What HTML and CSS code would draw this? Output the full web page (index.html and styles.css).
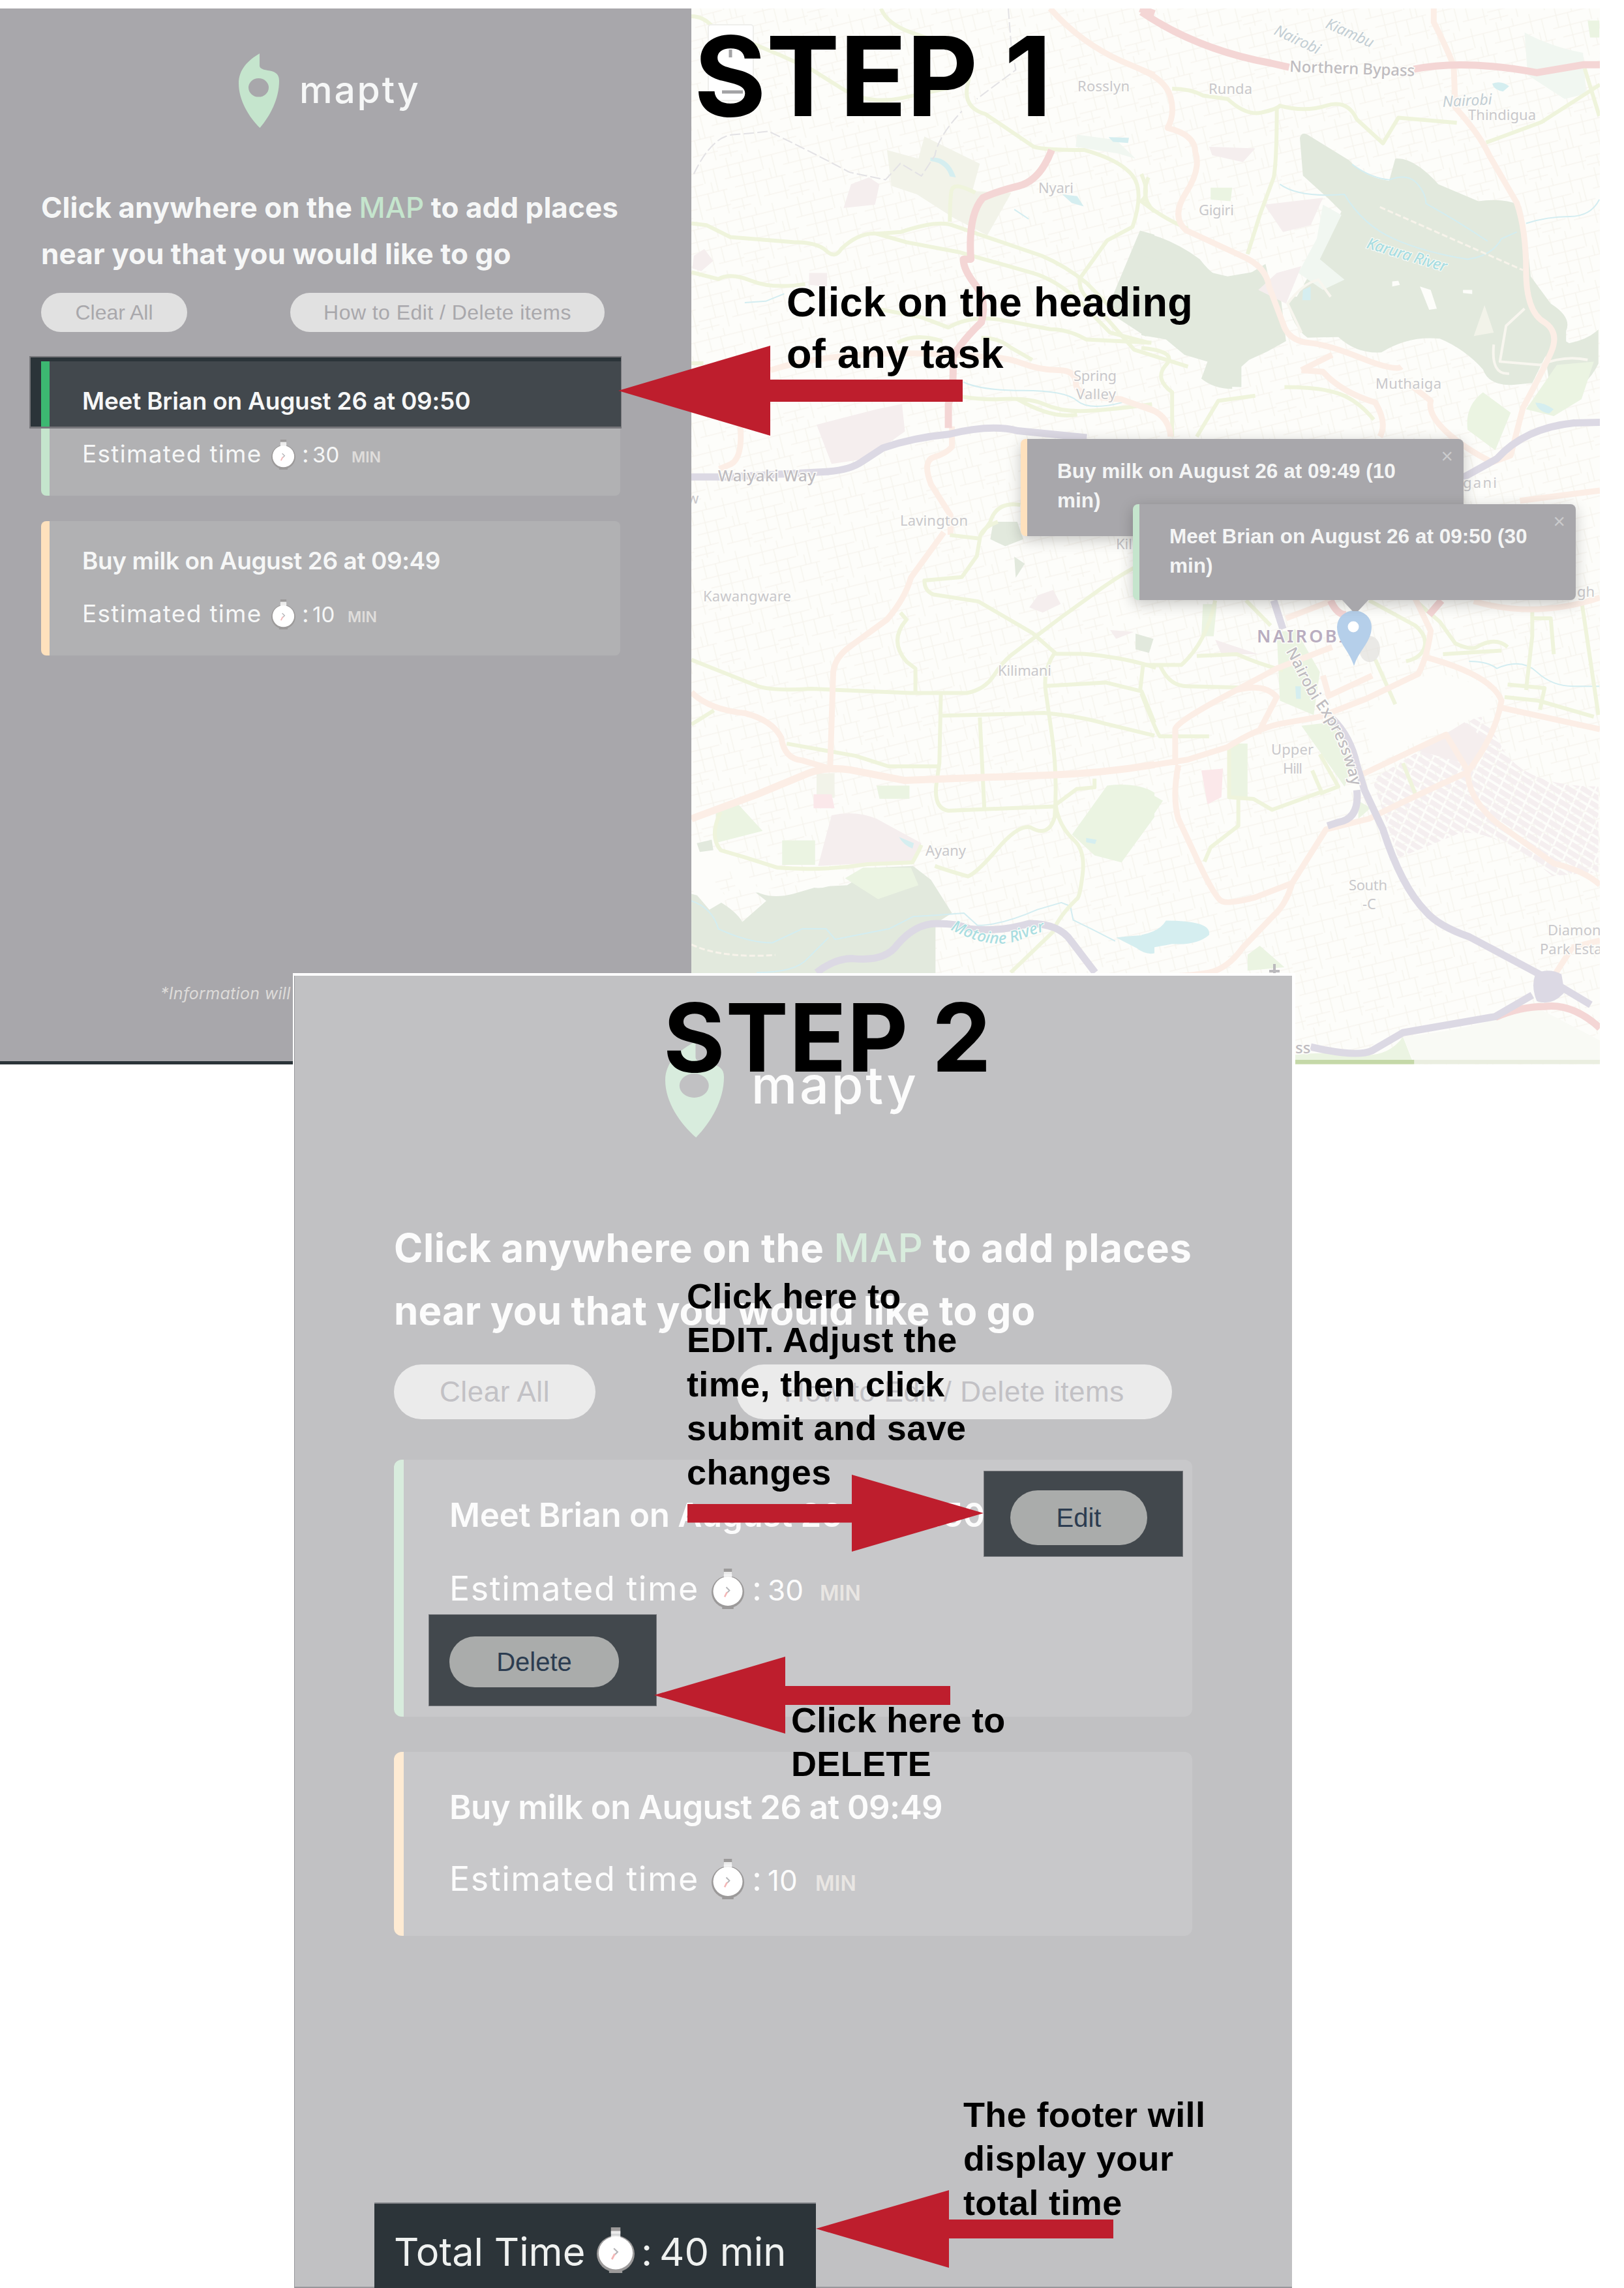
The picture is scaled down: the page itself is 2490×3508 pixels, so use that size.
FILE: index.html
```html
<!DOCTYPE html>
<html lang="en">
<head>
<meta charset="utf-8">
<title>mapty – how to edit and delete items</title>
<link rel="stylesheet" href="styles.css">
</head>
<body>
<svg class="defs" width="0" height="0" aria-hidden="true">
  <symbol id="pin" viewBox="0 0 62 114" preserveAspectRatio="none">
    <path fill-rule="evenodd" d="M32 0C15 10 0 24 0 46c0 26 16 52 32.500 68C48 96 62 70 62 42c0-10-5-13.500-14-15.500-10-1.500-16-3-16-8zM30.500 38a15.500 14.300 0 1 1 0 28.600 15.500 14.300 0 0 1 0-28.600z"/>
  </symbol>
  <symbol id="watch" viewBox="0 0 40 50" preserveAspectRatio="none">
    <rect class="watch-cap" x="15" y="0" width="10" height="7"/>
    <circle class="watch-rim" cx="20" cy="29" r="20"/>
    <rect class="watch-cap" x="13" y="44" width="14" height="6"/>
    <circle cx="20" cy="28" r="18" fill="#fff"/>
    <rect x="15" y="4" width="10" height="9" fill="#fff" opacity=".8"/>
    <path class="watch-hand" d="M18 23l4 4-3 3"/>
    <path class="watch-needle" d="M19 29l-3 6"/>
  </symbol>
</svg>

<main class="guide">
  <section class="shot shot-one">
    <aside class="sidebar">
      <div class="logo"><svg class="logo-pin"><use href="#pin"/></svg><span class="logo-name">mapty</span></div>
      <h2 class="intro">Click anywhere on the <em>MAP</em> to add places<br>near you that you would like to go</h2>
      <div class="actions"><button class="pill clear">Clear All</button><button class="pill howto">How to Edit / Delete items</button></div>
      <ul class="tasks">
        <li class="task green spotlit">
          <h3 class="task-title">Meet Brian on August 26 at 09:50</h3>
          <div class="task-time"><span class="label">Estimated time</span><svg class="watch"><use href="#watch"/></svg><span>:</span><span class="num">30</span><span class="unit">MIN</span></div>
        </li>
        <li class="task orange">
          <h3 class="task-title">Buy milk on August 26 at 09:49</h3>
          <div class="task-time narrow"><span class="label">Estimated time</span><svg class="watch"><use href="#watch"/></svg><span>:</span><span class="num">10</span><span class="unit">MIN</span></div>
        </li>
      </ul>
      <p class="note">*Information will</p>
    </aside>
    <div class="map">
      <svg class="map-art" viewBox="1060 13 1393 1619">
        <defs>
          <pattern id="streets" width="92" height="84" patternUnits="userSpaceOnUse" patternTransform="rotate(-14)">
            <path d="M0 12h92M0 31h58M12 47h80M0 66h40M52 71h40M9 0v31M27 12v54M44 31v53M61 0v31M61 47v24M78 12v35M86 47v37M0 78h30M34 0v12M70 31v16M18 66v18" fill="none" stroke="#f7f5ef" stroke-width="1.600"/>
          </pattern>
          <pattern id="sheds" width="46" height="22" patternUnits="userSpaceOnUse" patternTransform="rotate(28)">
            <rect width="40" height="15" fill="#f5eff0"/>
          </pattern>
          <path id="motoine" d="M1457 1425q60 32 105 17q25-12 48-16"/>
          <path id="expressway" d="M1971 998C1990 1030 2000 1060 2020 1085C2042 1115 2060 1150 2072 1206"/>
        </defs>
        <rect x="1060" y="13" width="1393" height="1619" fill="#fdfdfa"/>
        <rect x="1060" y="13" width="1393" height="1619" fill="url(#streets)"/>

        <!-- north-west -->
        <g transform="translate(1050 0) scale(.4592 .523)">
          <g class="park-dim"><path d="M800 400L985 480 960 560 1090 565 1010 690 900 640 775 570 690 545 675 440 780 465z"/><path class="pinkish" d="M555 540l60-20 35 20-15 60-105 10zM440 1245l200-45 85-15 10 80-130 80-115 15zM30 750l35-20 30 35-40 30-30-8zM415 800l60 0 0 40-60-5z"/></g>
          <path class="forest" d="M1520 676l48 12v290l-30 8-130-75z"/>
          <path class="wet" d="M1310 395l130 15 65 55-60-15-140-20z"/>
          <path class="water" d="M820 462q60-5 85 58l-20-3q-15-40-65-45zM1415 402l68 2-3 15-50-3zM1260 570l50 5 22 30-40-10z"/>
          <g class="stream"><path d="M200 887l70-4 62-22"/><path d="M930 1120q60 25 200 25t180 30 150 5"/><path d="M1100 614l48 28"/></g>
          <g class="rail"><path d="M30 510q60-110 130-115t120-10q120 50 270 120l120 22 50-48 70 37 45-60q10-55 90-130M1080 25l10 110 15 70-130 85"/></g>
          <g class="green-road">
            <path d="M22 48q40 0 70 30l230 85 100 40 100 55q90 50 200 30l160-30"/><path d="M655 25q20 45 100 70l130 40q80 40 60 110t60 90l160 95q30 10 170 10 120 30 160 75t0 150l-85 40-90 110q-10 40 50 80l130 130 180 50"/>
            <path d="M22 655l50 5 80 35 210 15q80 0 110 25t50-5q60-50 120-45l80-5q120-35 170-20l300 90q80 30 150 80l100 90"/><path d="M640 685l100 25 180 30 240 60q80 20 160 85l100 90 130 30"/><path d="M22 798l90 20q40-20 110 5t180 10"/><path d="M885 650q0-60 5-90t80 5"/>
            <path d="M640 905l150 25 90 30q80-40 190-20l150 25q60 0 120 30l218 10M710 1005q60-30 150-5M990 990q60 0 100 30l70 35M780 1135q170 40 270 35t150 15 120 20 240-20M22 1065h40"/><path d="M1568 620q-50-40-20-100M1110 1170q120 60 200 45"/>
            <path d="M1120 1480q-80-10-100 50l-30 38"/>
          </g>
          <g class="orange-road"><path d="M1220 25q100 100 240 155l108 40"/><path d="M286 1085q250-70 700-40 80 0 140 20t120 20 60 40 150 45l112 35"/><path d="M185 1240q10 100-30 120l-40 15"/><path d="M892 1250v60q-20 20-60 30t-10 80l65 90v58"/></g>
          <path class="red-road" d="M1225 440q-40 90-110 105t-120 35q-50 50-40 180l-25 0q0 30 40 75t20 110q-60 50-95 100 5 90-15 140v70"/><path class="red-road" d="M1520 25l48 15"/>
          <path class="purple-road" d="M22 1398h120l330-15q80-5 120-30l70-40q100-30 220-40 140-30 230-10l230 20"/>
        </g>

        <!-- north-east -->
        <g transform="translate(1750 0) scale(.4719 .523)">
          <path class="forest" d="M0 680q100 20 190 80 50 60 110 70l110-60 60 100q20 90 70 120l100-2q60 50 140 45 90-50 190-40 80 30 140 90 20 50 100 45l60-5 60-110 50-10v-33q20-40-50-80l-65-80q-20-190-40-210-50-20-130-10l-130-50q-80-80-140-75l-20 65q-80-10-130-60L540 395q-20-10-25 10l10 110 80 65 45 40-75 140-70 110-90-10-115-30-300 150q40-10 90 10l60 50 75 20-30 50q40 30 100 30v-80l110-30 20-40-420-50z"/>
          <path class="forest" d="M1300 958l90 48q60-10 95-40v100q-60 110-160 55z"/>
          <path class="forest" d="M0 750l280 60 130-20 40 60 20 150-60 30-60 25-25 20v60q-70 0-130-25l20-50-75-20-60-45-80-12z"/>
          <path class="blank" d="M905 840l35 10 20 55-25 3zM815 825l20-2 5 12-25 5zM1045 850l30 0 0 12-30-3z"/>
          <path class="blank" d="M400 760l110 20 20 60-60 50-50-50z"/>
          <path class="wet" d="M590 600l60 30-70 130 80 60-70 30-80-50 60-100zM1245 95q80 40 190 60l10 120-70 15-120-70z"/>
          <path class="pinkish" d="M400 600l190-20-40 80-90 20zM440 800l80-20-50 110-90-40zM220 430l150 5-40 40-100-20z"/>
          <path class="park" d="M1110 1150l90 60-50 110-90-60q-10-70 50-110zM1350 1070l120-10-40 110-90 50-90-20zM1450 60h38v50h-30zM225 550l70 0-5 40-65-5z"/>
          <path class="park-dim" d="M1115 895l30 80-65 10z"/>
          <path class="water" d="M1280 1180q30 0 60 20l-15 12q-35-5-45-32zM1140 245q30-10 55 8l-20 15q-30-5-35-23zM525 850l25-10v40h-27z"/>
          <g class="stream"><path d="M450 540q60 40 210 30 60 90 160 130t240 60q80-10 110-60l50-20M685 482q60 40 120 45 60-20 90 10t30 60q100 50 200 110M1250 655q70-20 140-20t98-50"/></g>
          <path class="track" d="M775 607l465 185"/>
          <path class="trail" d="M520 975l-45-85q50-60 100-70l40 50M1245 905l-60 50-20 105 130 10q80-30 155-15M1145 1010q-10 90 50 85"/>
          <g class="green-road">
            <path d="M100 260q60 0 100 20l80 10q60 50 110 40t60-20q80 20 150 0t100 40l85 70 50-75 190 15"/><path d="M1120 418l180-60 190-110M1440 200l48 140"/><path d="M440 320q0 150-10 200l-45 110-40 115"/><path d="M0 510q30 60 0 80 70 50 150 80"/><path d="M0 1020q120 10 80 50t20 80v130M180 1280l70-105 120-15M465 1135q120 0 180 20t110 75"/>
          </g>
          <g class="orange-road">
            <path d="M0 205q80 30 95 80t-10 90q90 20 90 70 20 50-30 120t0 110l180 75q80 30 90 90l50 120q20 40 80 45t170 45 130 25M520 1085l100-45M520 1085l70 5q60 60 170 90 40 60 15 100"/>
            <path d="M950 25v40q50 90 65 130l5 120q80 80 110 140l90 140q30 80 30 200t60 150q50 30 20 90t-90 160l-40 140-60 20q-90-40-150-90t-50-90l-70-50"/>
            <path d="M0 1190q90 20 95 90M1230 1468l260-30"/>
          </g>
          <path class="red-road" d="M0 35q180 110 420 150l60 12M885 203q160-30 400 10l150-23h55"/>
          <path class="purple-road" d="M1045 1400l110-55q90-90 250-105l85-2"/>
        </g>

        <!-- south-west -->
        <g transform="translate(1050 800) scale(.4592 .5357)">
          <path class="forest" d="M22 1065l90 20q60 30 80 60l80-60-60-40q60 40 150 20l80-20 100-5 90-50 130-5 60 40 70 95-55 30v240H22z"/>
          <path class="blank" d="M22 940q100-10 140 20t60 70 200 0l80-40q80 0-10 50-60 20-120-10-120 50-200 20l-20-50-60 20 50 60-60 30-60-60z"/>
          <path class="park" d="M535 1020l60-30 160 0 25 50-135 40zM105 820l75-10 80 75-160 35zM325 912h110v70h-110zM1410 755q100-10 158 20v70l-110 130-90-20-75-60zM640 755h110v38h-100z"/>
          <path class="park-dim" d="M440 720h60v70h-60z"/>
          <path class="pinkish" d="M490 840q80-15 150 10l150 70-20 50-325 15z"/><path class="rose" d="M430 780h60l10 40h-70z"/>
          <path class="forest" d="M1030 0h80l20 50-60 20-50-20zM1100 100l35 20-30 40zM1505 320l60 15-15 40-45-10zM40 920l50-10 5 30-45 5z"/>
          <path class="pinkish" d="M1180 210l50-15 25 40-60 25-45-15zM1420 310l80 5-60 20z"/>
          <path class="water" d="M1440 1190q90-10 128-5v50q-30 5-60-15zM715 902l50 18-5 15q-30-10-45-33zM1340 905l35 5-5 12-30-5z"/>
          <g class="stream"><path d="M22 1085q70 20 90 80 100 40 180 40l100-40 80 0 30 30 180-30 80-35q100-5 170-10l45 35q80 0 200-45l80-20 30 10 10 40 60 25 80 35"/><path d="M240 1290q130 0 170-40l70-60"/></g>
          <path class="track" d="M22 1210q100 40 280 30"/>
          <g class="green-road">
            <path d="M22 395l220 75q50 15 180 8l330 12h190q60-10 90-50t60-60l170-110 130-80q100-60 140-70M22 580l75-40M340 635l230 35 110 30h170M855 490l-5 200-10 60q-10 70 40 77l200-7 155-5"/><path d="M885 38l100 10-10 50-50 60-125 10q0 30 30 40l150 20 180 90 80 60h90q140 10 243 40M985 50q0-30 60-50M720 260l20 20q-60 60 0 120l30 20v70"/>
            <path d="M1235 375q-40 50-30 110l20 120q20 120 10 240-20 60-80 30-40-10-110 60t-100 80q-80-20-110-30"/><path d="M860 555l230-5 110-3q120 10 200 30l168 35M985 560l15 260M1205 470l200-10 120 25q20 40 43 90M1530 410l-10 75M1368 735v25l-60 5-70 45q10 60 60 100 40 30 30 100t-20 70q-60 50-80 95l-140 115"/><path d="M120 830q-40 70 0 110l80 20 110 30q150 10 300-10l150-5q20-30 30-50"/>
          </g>
          <g class="orange-road"><path class="big" d="M22 850l220-70 170-60q60-20 140-10l180 30 480-15q180-5 356-30"/><path d="M22 488q60 50 180 60 90 20 120 70 10 60 70 65l80 20M485 710l10-270q0-50 60-85l120-75q60-60 80-120l110-130"/></g>
          <path class="purple-road" d="M440 1290q60-40 120-40 110 10 150-40 60-60 130-60t110 15q100 10 200-15 100 0 140 50l80 90"/>
        </g>

        <!-- south-east -->
        <g transform="translate(1750 800) scale(.4719 .5485)">
          <path class="park" d="M0 745l70 35-70 90zM440 310l60-10 80 120-20 120-110-40zM520 570l100-10 70 120-30 60zM285 620h60v150h-60zM345 1210l40-25 80 60-120 10zM500 1490q100-10 200 0t150-50l35 77H500zM705 780l40 20-40 30zM200 230l45 0-10 90-40 0z"/>
          <path fill="url(#sheds)" d="M750 720l350-180 60 70q60 130 325 130v240l-150 10q-180-130-300-120l-200 70z"/>
          <path class="rose" d="M195 695l70-5-5 80-45 20z"/><path class="pinkish" d="M240 330l140 40-120 0zM900 640l150-80 80 60-60 60z"/>
          <path class="blank" d="M720 540q150-130 280-110l140 40-10 70-150 30-220 110z"/>
          <path class="water" d="M0 1155q60-10 80-40 150 0 140 40-40 30-120 25-60 10-100 15zM500 460h18v35h-15z"/>
          <path d="M850 1440q200-20 300-50l140-30 200 90v60H885z" fill="#f9faf5"/>
          <rect x="500" y="1504" width="387" height="12" fill="#c5d8a8"/><rect x="887" y="1504" width="604" height="12" fill="#eaeee0"/>
          <g class="stream"><path d="M1065 390q60 0 90 20 80-30 130 10t120 40h83"/></g>
          <g class="green-road">
            <path d="M0 400h130q80-60 110-180M60 400q30 60 90 60l250 5M180 375l130-5q80 30 150 45M0 480q50 110 60 120h160M315 620l-30 10v140l80 5 60 30 160-50-30-60M315 770v80l-90 60-20 40M580 760l60-20-60-90M740 220l150 70q40 30 30 60t-60 40M890 220l80 60 50 60q50 20 70 10 60-30 100 0M1270 250l0 70-20 150M1430 220l55 320M760 385l65 125M850 675l40 85M980 370l190-10M1270 270l60 0 10 100M1180 490l110 10 180 45M1190 455l120 10-15 60M340 220l80 70"/>
          </g>
          <g class="orange-road">
            <path d="M0 685l150-20 130-35q90-50 170-65l130-20 150-50 170-70q30-50 40-120l-50-90M110 680v-100q0-20 200-110l130-60 180-60M120 680q-20 90 0 150l70 130q50 90 70 100t110-10l120-40q-20 60-60 90l-100 90q-50 60-110 70t-220 15M490 1010l110-150 140-30q140-60 320-130 90-100 110-200-30-70-240-120M310 470q90-20 130 20l-60 100M600 490l150-60M470 270l150-50M720 705l270-110 70 100q0 80 100 150l180 110q100 20 150 60M1170 520l320 60M1080 222q200 50 410-10M1340 1270l60-80 90-20M590 430l20 60"/>
          </g>
          <path class="red-road" d="M615 220q20 40 50 40M975 220l-40 40M1150 1385q80-30 160-30 90-10 180 60"/>
          <path class="purple-road" d="M430 220l30 80M620 550q60 50 80 130l25 70 60 110q60 160 140 230 40 40 140 70l240 110 155 80M700 750q10 80-60 90l-35 10M550 1468q150 30 200 10l100-50 300-45 120-60"/>
          <path d="M1280 1265q40-20 85 0l10 50q-40 40-90 25-20-40-5-75z" fill="#dcd9e4"/>
        </g>

        <!-- place names -->
        <g class="place">
          <text x="1652" y="140" textLength="80">Rosslyn</text><text x="1592" y="296" textLength="54">Nyari</text><text x="1853" y="144" textLength="67">Runda</text><text x="1838" y="330" textLength="54">Gigiri</text>
          <text x="2251" y="184" textLength="104">Thindigua</text><text x="2109" y="596" textLength="101">Muthaiga</text><text x="2243" y="748" textLength="52">gani</text><text x="1646" y="584" textLength="66">Spring</text><text x="1650" y="612" textLength="61">Valley</text>
          <text x="1054" y="772">w</text><text x="1380" y="806" textLength="104">Lavington</text><text x="1711" y="842">Kil</text><text x="1078" y="922" textLength="135">Kawangware</text><text x="1530" y="1036" textLength="82">Kilimani</text><text x="1419" y="1312" textLength="62">Ayany</text>
          <text x="1949" y="1157" textLength="65">Upper</text><text x="1967" y="1186" textLength="30">Hill</text><text x="2068" y="1365" textLength="59">South</text><text x="2089" y="1394">-C</text><text x="2373" y="1434">Diamond</text><text x="2361" y="1463">Park Estate</text><text x="2418" y="915">gh</text>
        </g>
        <g class="road-name"><text x="1977" y="110" textLength="192" transform="rotate(2 1977 110)">Northern Bypass</text><text x="1101" y="738" textLength="150">Waiyaki Way</text><text x="1986" y="1615">ss</text><text><textPath href="#expressway" textLength="232">Nairobi Expressway</textPath></text></g>
        <g class="county"><text x="1952" y="52" textLength="75" transform="rotate(25 1952 52)">Nairobi</text><text x="2031" y="42" textLength="78" transform="rotate(24 2031 42)">Kiambu</text><text x="2212" y="164" textLength="76" transform="rotate(-3 2212 164)">Nairobi</text></g>
        <g class="river"><text x="2094" y="380" textLength="127" transform="rotate(17 2094 380)">Karura River</text><text><textPath href="#motoine" textLength="152">Motoine River</textPath></text></g>
        <text class="city" x="1927" y="985" textLength="136">NAIROBI</text>
        <path d="M1954 1478v14M1946 1489h16" stroke="#bbbabd" stroke-width="4"/>

        <!-- marker -->
        <ellipse cx="2100" cy="995" rx="16" ry="20" fill="#dedcd8" opacity=".6"/>
        <path d="M2076 1021C2068 996 2050 984 2050 961a26.500 25 0 0 1 53 0C2103 984 2084 996 2076 1021z" fill="#b5cfea"/><circle cx="2075" cy="961" r="8.500" fill="#fff"/>
        <!-- zoom control -->
        <rect x="1086" y="38" width="69" height="116" rx="4" fill="#fff" stroke="#efefec" stroke-width="2"/>
        <path d="M1120 76v12M1107 141h32" stroke="#a3a3a5" stroke-width="5"/>
      </svg>
      <div class="popup popup-milk"><p>Buy milk on August 26 at 09:49 (10<br>min)</p><span class="close">×</span></div>
      <div class="popup popup-brian"><p>Meet Brian on August 26 at 09:50 (30<br>min)</p><span class="close">×</span><i class="popup-tip"></i></div>
    </div>
  </section>

  <section class="shot shot-two">
    <aside class="sidebar large">
      <div class="logo"><svg class="logo-pin"><use href="#pin"/></svg><span class="logo-name">mapty</span></div>
      <h2 class="intro">Click anywhere on the <em>MAP</em> to add places<br><span class="tight">near you that you would like to go</span></h2>
      <div class="actions"><button class="pill clear">Clear All</button><button class="pill howto">How to Edit / Delete items</button></div>
      <ul class="tasks">
        <li class="task green open">
          <h3 class="task-title">Meet Brian on August 26 at 09:50</h3>
          <div class="task-time"><span class="label">Estimated time</span><svg class="watch"><use href="#watch"/></svg><span>:</span><span class="num">30</span><span class="unit">MIN</span></div>
          <div class="spot spot-edit"><button class="pill">Edit</button></div>
          <div class="spot spot-delete"><button class="pill">Delete</button></div>
        </li>
        <li class="task orange">
          <h3 class="task-title">Buy milk on August 26 at 09:49</h3>
          <div class="task-time narrow"><span class="label">Estimated time</span><svg class="watch"><use href="#watch"/></svg><span>:</span><span class="num">10</span><span class="unit">MIN</span></div>
        </li>
      </ul>
      <footer class="total"><span>Total Time</span><svg class="watch dark"><use href="#watch"/></svg><span>:</span><span>40 min</span></footer>
    </aside>
  </section>

  <svg class="arrows" viewBox="0 0 2490 3508" fill="#be1e2d">
    <path d="M948 599L1181 530V582H1476V616H1181V668z"/>
    <path d="M1508 2320L1306 2261V2306H1054V2334.500H1306V2379z"/>
    <path d="M1003 2599L1204 2540V2585H1457V2614H1204V2658z"/>
    <path d="M1251 3417L1455 3358V3403H1707V3432H1455V3477z"/>
  </svg>
  <h1 class="step step-one">STEP 1</h1>
  <h1 class="step step-two">STEP 2</h1>
  <p class="hint hint-heading">Click on the heading<br>of any task</p>
  <p class="hint hint-edit">Click here to<br>EDIT. Adjust the<br>time, then click<br>submit and save<br>changes</p>
  <p class="hint hint-delete">Click here to<br>DELETE</p>
  <p class="hint hint-footer">The footer will<br>display your<br>total time</p>
</main>
</body>
</html>
```
FILE: styles.css
```css
* { box-sizing: border-box; margin: 0; padding: 0; }
body { background: #fff; }
.defs { position: absolute; }
.guide { position: relative; width: 2490px; height: 3508px; overflow: hidden; font-family: Inter, "Liberation Sans", sans-serif; }

/* screenshots stacked on the sheet */
.shot { position: absolute; }
.shot-one { left: 0; top: 13px; width: 2453px; height: 1619px; display: flex; }
.shot-two { left: 449px; top: 1492px; width: 1537px; height: 2016px; padding: 4px 5px 0 2px; background: #fff; }

.sidebar {
  --green: #c5e5cd; --orange: #fee1bd; --card: #b1b1b3; --pill: #e1e1e1;
  width: 1060px; padding: 69px 109px 0 63px; background: #a8a7ab; color: #f6f7f7;
  border-bottom: 5px solid #2b3439;
}
.sidebar.large {
  --green: #d8ecdd; --orange: #feebd3; --card: #c8c8ca; --pill: #ebebeb;
  width: 1530px; height: 2012px; padding: 101px 153px 0 152px; background: #c1c1c3; color: #fcfcfc;
  border: solid #97979b; border-width: 0 0 2px 1px; position: relative;
}

.logo { display: flex; padding-left: 303px; height: 114px; }
.logo-pin { width: 62px; height: 114px; fill: var(--green); }
.logo-name { margin: 26px 0 0 31px; font-size: 57px; line-height: 60px; font-weight: 500; letter-spacing: 2.8px; }
.intro { margin-top: 87px; font-size: 44px; line-height: 70.5px; font-weight: 700; letter-spacing: .05px; white-space: nowrap; }
.intro em { font-style: normal; font-weight: 500; color: var(--green); }
.actions { display: flex; justify-content: space-between; margin-top: 25px; padding-right: 24px; }
.pill { border: 0; border-radius: 30px; background: var(--pill); color: #a9a8ac; font-family: "Liberation Sans", Arial, sans-serif; font-size: 32px; height: 60px; white-space: nowrap; }
.clear { width: 224px; }
.howto { width: 482px; letter-spacing: .45px; }

.tasks { list-style: none; display: flex; flex-direction: column; gap: 39px; margin-top: 45px; }
.task { position: relative; height: 206px; padding: 36px 0 0 63px; border-radius: 8px; background: linear-gradient(90deg, var(--bar) 13px, var(--card) 13px); }
.green { --bar: var(--green); }
.orange { --bar: var(--orange); }
.task-title { position: relative; font-size: 37px; line-height: 50px; font-weight: 600; letter-spacing: -.22px; white-space: nowrap; }
.orange .task-title { letter-spacing: -.42px; }
.task-time { display: grid; grid-template-columns: 290px 47px 16px 60px auto; align-items: baseline; margin-top: 31px; font-size: 37px; line-height: 50px; height: 50px; }
.task-time.narrow { grid-template-columns: 290px 47px 16px 54px auto; }
.label { letter-spacing: 1.3px; white-space: nowrap; }
.num { font-size: 33px; }
.unit { font-size: 23px; color: #dfdddb; font-weight: 600; }
.watch { width: 37px; height: 46px; align-self: start; margin-top: 3px; }
.watch-cap, .watch-rim { fill: #9c9a9a; }
.watch-hand { fill: none; stroke: #b5b5b8; stroke-width: 1.5px; }
.watch-needle { fill: none; stroke: #f3b6b6; stroke-width: 2px; }

/* darkened window around the first task heading */
.spotlit::before {
  content: ""; position: absolute; left: -18px; top: -8px; width: 905px; height: 106px;
  background: linear-gradient(90deg, #3cb871 13px, #42484d 13px) 16px 6px no-repeat #2b3439;
  border: solid #77777b; border-width: 2px 1px 3px 2px;
}
.note { margin: 501px 0 0 183px; font-size: 25px; line-height: 34px; font-style: italic; letter-spacing: .3px; color: #dddbd9; white-space: nowrap; }

/* enlarged sidebar */
.large .logo { padding-left: 416px; height: 147px; }
.large .logo-pin { width: 90px; height: 147px; }
.large .logo-name { margin: 24px 0 0 42px; font-size: 79px; line-height: 84px; letter-spacing: 3.8px; }
.large .intro { margin-top: 121px; font-size: 60px; line-height: 96px; letter-spacing: .5px; }
.large .tight { letter-spacing: .1px; }
.large .actions { margin-top: 35px; padding-right: 31px; }
.large .pill { height: 84px; border-radius: 42px; font-size: 44px; color: #c2c1c5; }
.large .clear { width: 309px; letter-spacing: .6px; }
.large .howto { width: 668px; letter-spacing: .6px; }
.large .tasks { gap: 54px; margin-top: 62px; }
.large .task { height: 282px; padding: 50px 0 0 85px; background: linear-gradient(90deg, var(--bar) 15px, var(--card) 15px); border-radius: 12px; }
.large .task.open { height: 394px; }
.large .task-title { font-size: 51px; line-height: 70px; letter-spacing: -.3px; }
.large .orange .task-title { letter-spacing: -.6px; }
.large .task-time { grid-template-columns: 402px 62px 24px 80px auto; margin-top: 43px; font-size: 52px; line-height: 70px; height: 70px; }
.large .task-time.narrow { grid-template-columns: 402px 62px 24px 73px auto; margin-top: 40px; }
.large .label { letter-spacing: 1.5px; }
.large .num { font-size: 44px; }
.large .unit { font-size: 32px; color: #e9e6e3; }
.large .watch { width: 50px; height: 62px; margin-top: 4px; }
.large .watch-cap, .large .watch-rim { fill: #b2b0b0; }
.spot { position: absolute; background: #42484d; display: flex; box-shadow: 0 0 0 1px #77797d; }
.large .spot .pill { background: #aaacab; color: #2c3c50; font-size: 40px; }
.spot-edit { left: 905px; top: 18px; width: 304px; height: 130px; padding: 29px 0 0 40px; }
.spot-edit .pill { width: 210px; }
.spot-delete { left: 54px; top: 238px; width: 348px; height: 139px; padding: 33px 0 0 31px; }
.large .spot-delete .pill { width: 260px; height: 78px; }
.total {
  position: absolute; left: 122px; bottom: -2px; width: 677px; height: 131px; padding: 38px 0 0 30px;
  background: #2c3439; border-top: 2px solid #77797d; display: grid; grid-template-columns: 311px 68px 28px auto; font-size: 59.5px; line-height: 70px; color: #eff1f0; white-space: nowrap;
}
.large .watch.dark { width: 58px; height: 70px; margin-top: -2px; }
.large .dark .watch-cap, .large .dark .watch-rim { fill: #111517; }

/* map */
.map { position: relative; width: 1393px; height: 1619px; overflow: hidden; }
.map-art { display: block; width: 1393px; height: 1619px; font-family: "Noto Sans", "Open Sans", sans-serif; }
.map-art path { vector-effect: non-scaling-stroke; }
.forest { fill: #e2e9dd; }
.park { fill: #ebf4e2; }
.park-dim { fill: #f2f3e9; }
.pinkish { fill: #f5eeee; }
.rose { fill: #fbe8ea; }
.wet { fill: #f1f7f1; }
.water { fill: #d5eef0; }
.blank { fill: #fdfdfa; }
.green-road, .orange-road, .red-road, .purple-road, .stream, .rail, .track, .trail { fill: none; stroke-linejoin: round; }
.green-road { stroke: #eff4dc; stroke-width: 6px; }
.orange-road { stroke: #fceee6; stroke-width: 9px; }
.orange-road .big { stroke-width: 11px; }
.red-road { stroke: #f4d6d5; stroke-width: 11px; }
.purple-road { stroke: #dcd9e4; stroke-width: 11px; }
.stream { stroke: #d3edf1; stroke-width: 2px; }
.rail { stroke: #e3e2e5; stroke-width: 2px; stroke-dasharray: 16 5; }
.track { stroke: #f7f3ea; stroke-width: 3px; stroke-dasharray: 9 4; }
.trail { stroke: #f8f6ef; stroke-width: 4px; }
.place, .road-name, .county, .river, .city { paint-order: stroke; stroke: #fdfdfa; stroke-width: 3px; }
.place { font-size: 22px; fill: #c9c8cb; }
.road-name { font-size: 24px; fill: #bfbcc0; font-weight: 500; }
.county { font-size: 23px; fill: #c3ced4; font-style: italic; }
.river { font-size: 24px; fill: #a9dde1; font-style: italic; font-weight: 500; stroke-width: 2px; }
.city { font-size: 27px; font-weight: 600; fill: #b9adc0; }

.popup { position: absolute; padding: 27px 0 0 46px; background: #a8a7ab; border-left: 10px solid #fee1bd; border-radius: 8px; box-shadow: 0 6px 22px rgba(0, 0, 0, .22); color: #f4f5f5; font: 700 31.5px/44.5px "Liberation Sans", Arial, sans-serif; white-space: nowrap; }
.popup-milk { left: 505px; top: 660px; width: 679px; height: 149px; }
.popup-brian { left: 677px; top: 760px; width: 679px; height: 147px; border-color: #c5e5cd; }
.close { position: absolute; right: 16px; top: 4px; font-weight: 400; color: #cbcbcd; }
.popup-tip { position: absolute; left: 310px; top: 146px; width: 42px; height: 19px; background: #a8a7ab; clip-path: polygon(0 0, 100% 0, 60% 95%, 40% 95%); }

/* annotations */
.arrows { position: absolute; left: 0; top: 0; width: 2490px; height: 3508px; }
.step, .hint { position: absolute; color: #000; white-space: nowrap; }
.step { font-size: 169px; line-height: 200px; font-weight: 700; }
.step-one { left: 1064px; top: 17px; }
.step-two { left: 1017px; top: 1491px; font-size: 144.5px; letter-spacing: 1px; }
.hint { font: 700 54px/67.4px "Liberation Sans", Arial, sans-serif; letter-spacing: .35px; }
.hint-heading { left: 1206px; top: 424px; font-size: 63px; line-height: 78.5px; }
.hint-edit { left: 1053px; top: 1954px; }
.hint-delete { left: 1213px; top: 2604px; }
.hint-footer { left: 1477px; top: 3209px; }
```
